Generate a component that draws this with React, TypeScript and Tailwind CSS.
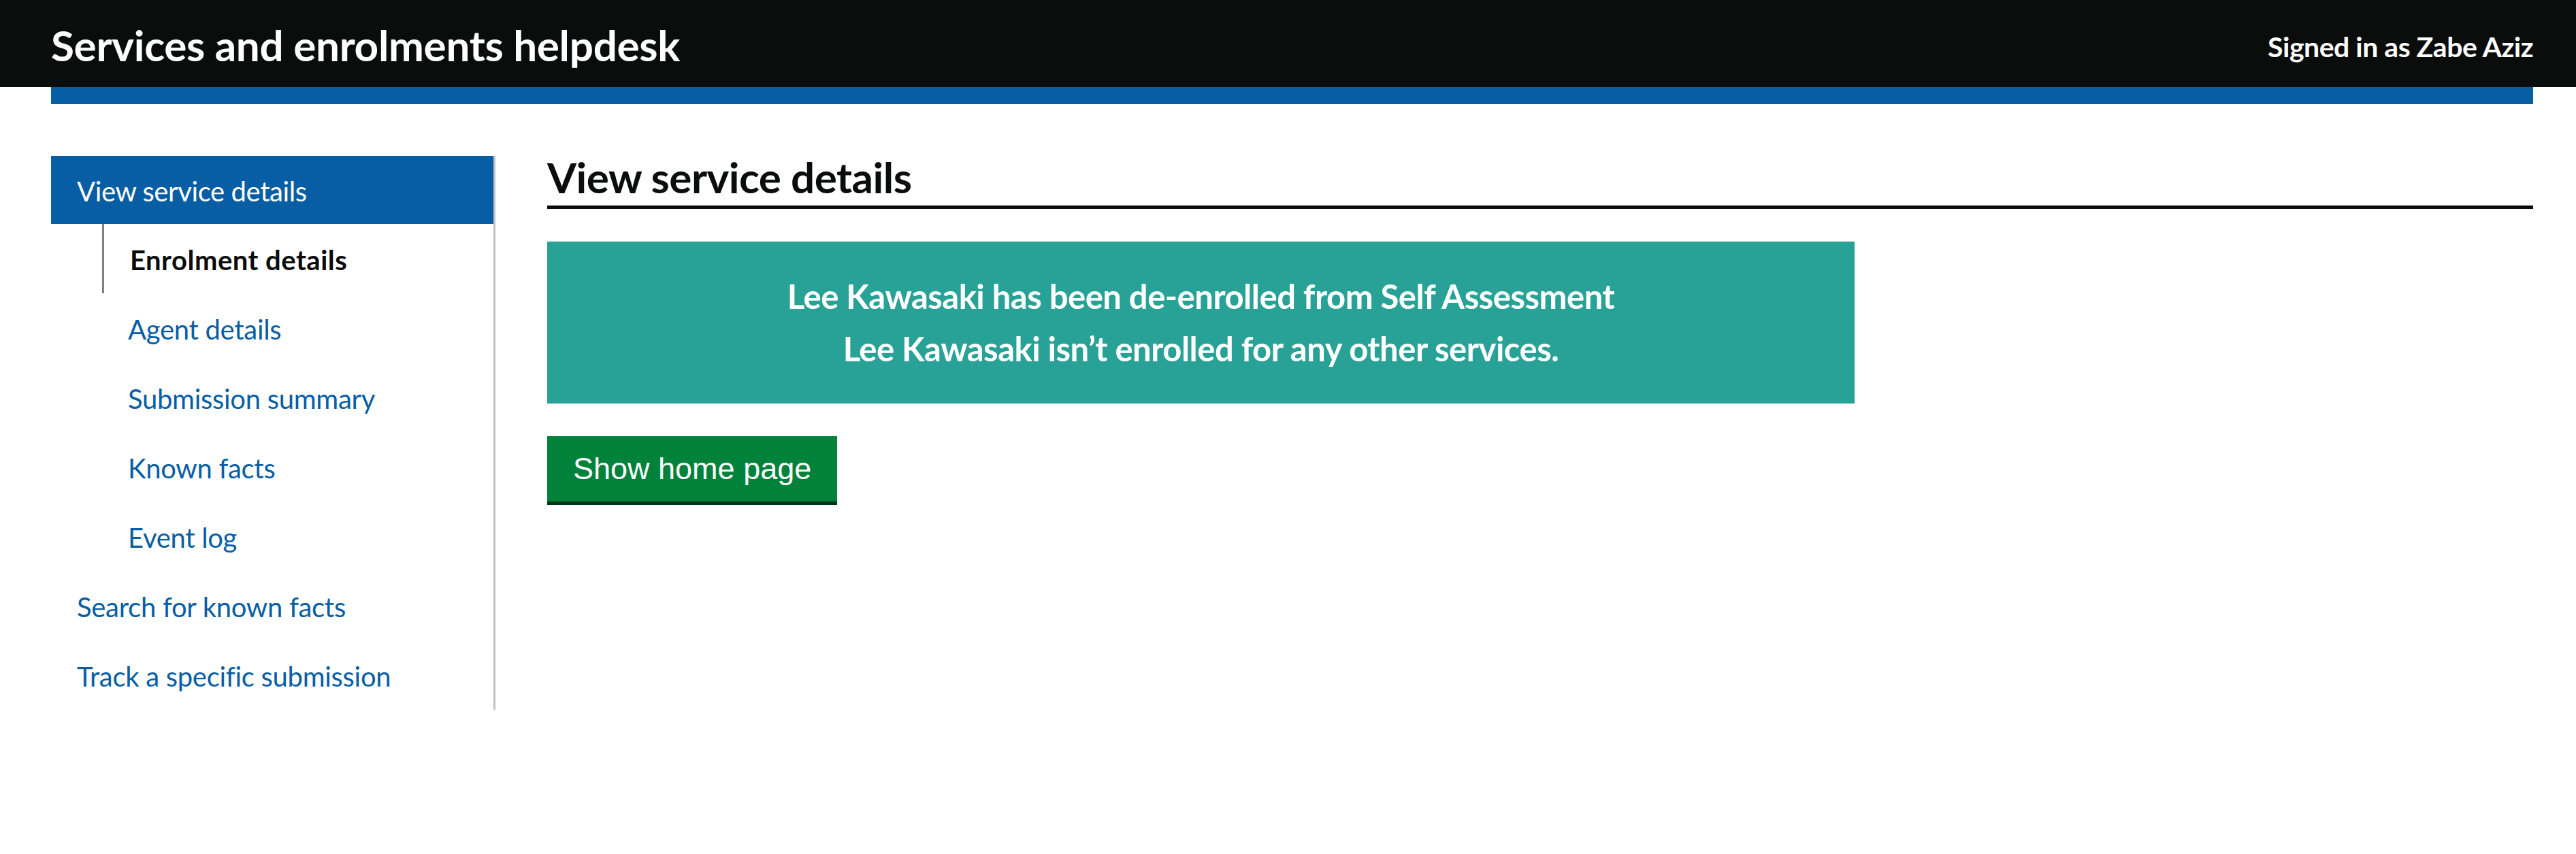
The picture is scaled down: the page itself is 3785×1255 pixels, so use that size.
import React from "react";

const navSub = [
  { label: "Enrolment details", active: true },
  { label: "Agent details" },
  { label: "Submission summary" },
  { label: "Known facts" },
  { label: "Event log" },
];

export default function App() {
  return (
    <div className="min-h-screen bg-white font-['Lato',sans-serif] text-[#0b0c0c]">
      <header className="bg-[#0b0c0c]">
        <div className="ml-[75px] mr-[63px] flex h-[128px] items-center justify-between">
          <span className="pt-[4px] text-[62px] font-bold leading-none tracking-[-0.3px] text-white">
            Services and enrolments helpdesk
          </span>
          <span className="pt-[8px] text-[41px] font-bold leading-none tracking-[-0.5px] text-white">
            Signed in as Zabe Aziz
          </span>
        </div>
      </header>
      <div className="ml-[75px] mr-[63px] h-[25px] bg-[#085ea4]" />

      <div className="ml-[75px] mr-[63px] mt-[76px] flex items-start">
        <nav className="w-[653px] shrink-0 border-r-[3px] border-[#bfc1c3]">
          <ul>
            <li className="flex h-[100px] items-center bg-[#085ea4] pl-[38px] pt-[4px] text-[40px] tracking-[-0.4px] text-white">
              View service details
            </li>
            {navSub.map((item) => (
              <li key={item.label} className="ml-[75px] flex h-[102px] items-stretch">
                <div
                  className={
                    item.active
                      ? "flex flex-1 items-center border-l-[3px] border-[#808080] pl-[38px] pt-[4px] text-[40px] font-bold tracking-[0.5px] text-[#0b0c0c]"
                      : "flex flex-1 items-center border-l-[3px] border-transparent pl-[35px] pt-[4px] text-[40px] tracking-[-0.3px] text-[#085ea4]"
                  }
                >
                  {item.label}
                </div>
              </li>
            ))}
            <li className="flex h-[102px] items-center pl-[38px] pt-[4px] text-[40px] tracking-[-0.3px] text-[#085ea4]">
              Search for known facts
            </li>
            <li className="flex h-[102px] items-center pl-[38px] pt-[4px] text-[40px] tracking-[-0.3px] text-[#085ea4]">
              Track a specific submission
            </li>
          </ul>
        </nav>

        <main className="ml-[76px] flex-1">
          <h1 className="border-b-[5px] border-[#0b0c0c] pb-[11px] text-[62px] font-bold leading-[62px] tracking-[-0.5px]">
            View service details
          </h1>
          <div className="mt-[48px] flex w-[1921px] flex-col items-center bg-[#28a197] py-[42px] text-[49px] font-bold leading-[77px] tracking-[-0.5px] text-white">
            <p>Lee Kawasaki has been de-enrolled from Self Assessment</p>
            <p>Lee Kawasaki isn’t enrolled for any other services.</p>
          </div>
          <button className="mt-[48px] flex h-[101px] items-center border-b-[5px] border-[#003618] bg-[#00823b] px-[38px] font-['Liberation_Sans',sans-serif] text-[45px] text-white">
            Show home page
          </button>
        </main>
      </div>
    </div>
  );
}
